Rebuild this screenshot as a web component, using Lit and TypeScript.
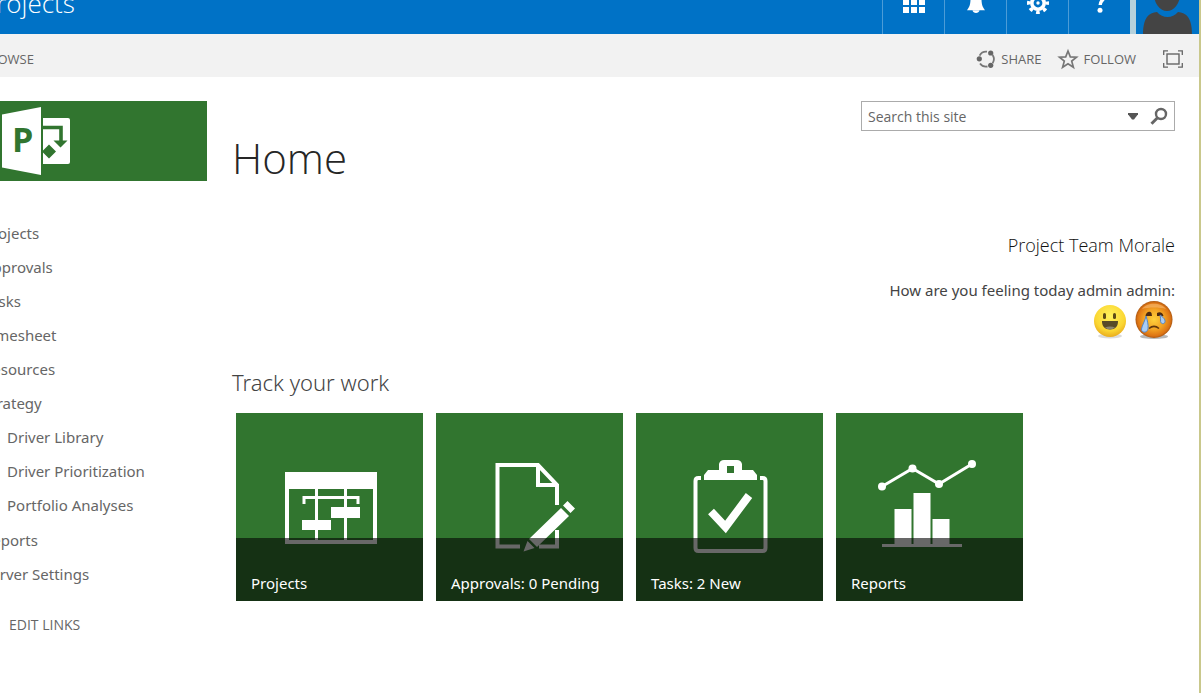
import { LitElement, html, css, svg } from "lit";
import { customElement } from "lit/decorators.js";

const appsIcon = svg`<svg class="bar-icon" viewBox="0 0 22 22" aria-hidden="true">
  ${[0, 8, 16].map((y) => [0, 8, 16].map((x) => svg`<rect x=${x} y=${y} width="6" height="6" fill="#fff"/>`))}
</svg>`;

const bellIcon = svg`<svg class="bar-icon" viewBox="0 0 22 22" aria-hidden="true" fill="#fff">
  <path d="M11 0c1 0 1.600.7 1.600 1.600C15.500 2.500 16.500 5 16.500 8c0 6 1.500 8.500 3.500 11.300H2C4 16.500 5.500 14 5.500 8c0-3 1-5.500 3.900-6.400C9.400.7 10 0 11 0z"/>
  <path d="M7.500 19.300h7c-.4 1.700-1.700 2.700-3.500 2.700s-3.100-1-3.500-2.700z"/>
</svg>`;

const gearIcon = svg`<svg class="bar-icon" viewBox="0 0 22 22" aria-hidden="true">
  <circle cx="11" cy="12" r="6.200" fill="none" stroke="#fff" stroke-width="3.600"/>
  <circle cx="11" cy="12" r="9.300" fill="none" stroke="#fff" stroke-width="3.400" stroke-dasharray="3.652 3.652" stroke-dashoffset="1.826"/>
  <circle cx="11" cy="12" r="1.700" fill="#fff"/>
</svg>`;

const helpIcon = svg`<svg class="bar-icon" viewBox="0 0 22 22" aria-hidden="true">
  <path d="M6 2.500C8 .8 10 .3 12 .5c3 .3 4.200 2.200 4 4.500-.3 3.500-4.800 4-4.800 9" fill="none" stroke="#fff" stroke-width="3.400"/>
  <circle cx="11" cy="19.300" r="2.500" fill="#fff"/>
</svg>`;

const avatarIcon = svg`<svg class="avatar" viewBox="0 0 63 64" aria-hidden="true" fill="#444">
  <ellipse cx="31" cy="24" rx="13" ry="17"/>
  <path d="M7 64c0-6 1-13 4-17 2-3 6-4.500 10-5 3 3.500 6.500 5 10.500 5s7.500-1.500 10.500-5c4 .5 8 2 10 5 3 4 4 11 4 17z"/>
</svg>`;

const shareIcon = svg`<svg class="cmd-icon" viewBox="0 0 20 20" aria-hidden="true">
  <path d="M3.600 6.600A7.500 7.500 0 0 1 11 2.700M16.600 6a7.500 7.500 0 0 1 0 8.200M11.500 17.500A7.500 7.500 0 0 1 4 14.500" fill="none" stroke="#777" stroke-width="1.800"/>
  <circle cx="3.300" cy="9.800" r="2.600" fill="#666"/>
  <circle cx="14.700" cy="4" r="2.600" fill="#666"/>
  <circle cx="14.700" cy="16.300" r="2.600" fill="#666"/>
</svg>`;

const starIcon = svg`<svg class="cmd-icon" viewBox="0 0 20 20" aria-hidden="true">
  <path d="M10 2l2.300 5.900 6.200.3-4.800 3.900 1.700 6.200L10 14.800l-5.400 3.500 1.700-6.200L1.500 8.200l6.200-.3z" fill="none" stroke="#777" stroke-width="1.700"/>
</svg>`;

const focusIcon = svg`<svg class="cmd-icon" viewBox="0 0 20 18" aria-hidden="true" fill="none" stroke="#666">
  <rect x="4" y="4" width="12" height="10" stroke-width="1.400"/>
  <path d="M.7 5V.8H5M15 .8h4.300V5M19.300 13v4.200H15M5 17.200H.7V13" stroke-width="1.300"/>
</svg>`;

const siteLogo = svg`<svg class="logo" viewBox="0 0 70 70" role="img" aria-label="Project">
  <rect x="40" y="12" width="30" height="46" rx="2" fill="#fff"/>
  <path d="M42 21.500h19V36" fill="none" stroke="#31752f" stroke-width="3.600"/>
  <path d="M53.500 34.500h14l-7 7zM49 38.500l7 7-7 7-7-7z" fill="#31752f"/>
  <path d="M2 8.500L41 1v68L2 61.500z" fill="#fff"/>
  <path d="M41 1h2v68h-2z" fill="#31752f"/>
  <text x="12" y="46" class="logo-letter">P</text>
</svg>`;

const caretIcon = svg`<svg class="caret" viewBox="0 0 12 8" aria-hidden="true"><path d="M1 1h10v1.200L7 7.500H5L1 2.200z" fill="#555"/></svg>`;

const lensIcon = svg`<svg class="lens" viewBox="0 0 18 18" aria-hidden="true" fill="none" stroke="#666">
  <circle cx="11" cy="7" r="5" stroke-width="2.400"/><path d="M7.500 10.800L1.500 16.800" stroke-width="3"/>
</svg>`;

const happyFace = svg`<svg class="face" viewBox="0 0 38 38" aria-hidden="true">
  <defs>
    <radialGradient id="happy" cx=".5" cy=".35" r=".65"><stop offset="0" stop-color="#fff25c"/><stop offset=".7" stop-color="#fbd733"/><stop offset="1" stop-color="#e9ac1d"/></radialGradient>
  </defs>
  <ellipse cx="19" cy="35" rx="12" ry="2.500" fill="#ccc" opacity=".7"/>
  <circle cx="19" cy="20" r="16" fill="url(#happy)"/>
  <rect x="12" y="12" width="3" height="6" rx="1.500" fill="#5c4a17"/><rect x="22" y="12" width="3" height="6" rx="1.500" fill="#5c4a17"/>
  <path d="M11 20h16c.3 5-3 8.500-8 8.500S10.700 25 11 20z" fill="#574a28"/><path d="M14 26.500c3-1.500 7-1.500 10 0-3 2.600-7 2.600-10 0z" fill="#8a8470"/>
</svg>`;

const sadFace = svg`<svg class="face" viewBox="0 0 38 38" aria-hidden="true">
  <defs>
    <radialGradient id="sad" cx=".5" cy=".5" r=".54"><stop offset="0" stop-color="#ffd23c"/><stop offset=".5" stop-color="#f3a324"/><stop offset=".82" stop-color="#dd7414"/><stop offset="1" stop-color="#8a4512"/></radialGradient>
  </defs>
  <ellipse cx="19" cy="35.500" rx="14" ry="2.500" fill="#999" opacity=".7"/>
  <circle cx="19" cy="18.500" r="18.500" fill="url(#sad)"/>
  <path d="M7 8C12 1 26 1 31 8 25 6 13 6 7 8z" fill="#f8bd73" opacity=".6"/>
  <path d="M10.500 15c0-3 4-6 6-3l.5 3zM22 12c3-2 6 0 6.500 3H22z" fill="#4d2a10"/>
  <path d="M14 27.500c3-2.500 7-2.500 10 0" fill="none" stroke="#62360c" stroke-width="1.600"/>
  <path d="M11 15c1.500 5 2.500 9 2 12.500-.5 5-7 4.500-6.500.5C7 24.500 10 20 11 15z" fill="#a9cdf5" stroke="#5585c5" stroke-width="1"/>
  <path d="M25 14c3 2 5.500 4.500 5 7-.8 2.500-4.200 2-4.400-.5-.2-2 .2-4-.6-6.500z" fill="#a9cdf5" stroke="#5585c5" stroke-width="1"/>
</svg>`;

const projectsArt = svg`<svg class="art" viewBox="0 0 187 188" aria-hidden="true">
  <path d="M49 59h92v72H49zM53 76v51h84V76z" fill="#fff" fill-rule="evenodd"/>
  <path d="M80.500 76v51M109.500 76v51" stroke="#fff" stroke-width="3"/>
  <path d="M68 91v-6.500h54V91" fill="none" stroke="#fff" stroke-width="3"/>
  <path d="M95 94h29v11H95zM66 107h29v10H66z" fill="#fff"/>
</svg>`;

const approvalsArt = svg`<svg class="art" viewBox="0 0 187 188" aria-hidden="true">
  <path d="M121 92V72L102 52H61.500v81.500H84M121 117v16.500h-18" fill="none" stroke="#fff" stroke-width="4"/>
  <path d="M102 52v20h20" fill="none" stroke="#fff" stroke-width="4"/>
  <path d="M125 95l8 8-32 31-8-8zM127 92.500l4.500-4.500 7.500 7.500-4.500 4.500zM91.500 128l7 7-11 3.500z" fill="#fff"/>
</svg>`;

const tasksArt = svg`<svg class="art" viewBox="0 0 187 188" aria-hidden="true">
  <path d="M65 65h-2.500q-3 0-3 3v67q0 3 3 3h64q3 0 3-3V68q0-3-3-3H124" fill="none" stroke="#fff" stroke-width="4"/>
  <path d="M68 67v-5l4-5h11v-6q1-4 5-4h13q4 0 5 4v6h11l4 5v5zM91 53v7h7v-7z" fill="#fff" fill-rule="evenodd"/>
  <path d="M75 98.500L89.500 114 113 82.500" fill="none" stroke="#fff" stroke-width="8"/>
</svg>`;

const reportsArt = svg`<svg class="art" viewBox="0 0 187 188" aria-hidden="true">
  <path d="M46 73.500L76.500 55.500 103 71l33-20" fill="none" stroke="#fff" stroke-width="3"/>
  <g fill="#fff"><circle cx="46" cy="73.500" r="4"/><circle cx="76.500" cy="55.500" r="4"/><circle cx="103" cy="71" r="4"/><circle cx="136" cy="51" r="4"/>
  <path d="M46 131h80v3H46zM58.500 96h17v35h-17zM77.500 80h17v51h-17zM96.500 106h17v25h-17z"/></g>
</svg>`;

@customElement("app-root")
export class AppRoot extends LitElement {
  static styles = css`
    :host {
      display: block;
      padding-right: 1px;
      overflow: hidden;
      background: #fff;
      color: #444;
      font: 15px/34px "Noto Sans", "Open Sans", sans-serif;
    }
    * { box-sizing: border-box; }
    a { color: inherit; text-decoration: none; }
    button { font: inherit; color: inherit; border: 0; background: none; padding: 0; display: flex; align-items: center; justify-content: center; }
    h1, h2, h3, p { margin: 0; font-weight: 400; }
    svg { display: block; overflow: visible; }

    .window { min-height: 100vh; border-right: 2px solid #c9c88c; overflow: hidden; }
    .suite { display: flex; height: 64px; margin-top: -30px; background: #0072c6; color: #fff; }
    .suite-title { flex: 1; margin-left: -19px; padding-top: 16px; font: 300 26px/34px "Open Sans", sans-serif; }
    .suite-button { width: 62px; border-left: 1px solid #4c9cd7; }
    .bar-icon { width: 22px; height: 22px; }
    .account { width: 69px; border-left: 6px solid #b5d1dc; justify-content: flex-start; }
    .avatar { width: 63px; height: 64px; }

    .commands { display: flex; align-items: center; height: 43px; padding: 7px 16px 0 0; background: #f2f2f2; color: #666; font: 13px/18px "Open Sans", sans-serif; }
    .browse { flex: 1; }
    .browse a { margin-left: -19px; }
    .command { gap: 5px; margin-right: 17px; }
    .command:last-child { margin: 0 0 0 10px; }
    .cmd-icon { width: 20px; height: 20px; }

    .page { display: flex; gap: 25px; padding: 24px 24px 0 0; }
    .side { flex: none; width: 228px; margin-left: -21px; color: #666; }
    .logo-link { display: flex; align-items: center; height: 80px; padding-left: 21px; background: #31752f; }
    .logo { width: 70px; height: 70px; }
    .logo-letter { font: 700 34px "Open Sans", sans-serif; fill: #31752f; }
    .nav { margin-top: 35px; padding-left: 4px; }
    .list { list-style: none; margin: 0; padding: 0; }
    .list .list { padding: 0 0 1px 24px; }
    .edit { margin: 17px 0 0 26px; font: 14px/34px "Open Sans", sans-serif; }

    .main { flex: 1; min-width: 0; }
    .top { display: flex; justify-content: space-between; align-items: flex-start; }
    .title { padding-top: 28px; font: 300 42px/58px "Open Sans", sans-serif; color: #262626; }
    .search { display: flex; align-items: center; width: 314px; height: 30px; border: 1px solid #ababab; padding: 0 6px; }
    .search-box { flex: 1; min-width: 0; border: 0; padding: 1px 0 0; outline: 0; background: none; font: 14px/20px "Open Sans", sans-serif; color: #666; }
    .search-box::placeholder { color: #666; opacity: 1; }
    .caret { width: 12px; height: 8px; margin-right: 11px; }
    .lens { width: 18px; height: 18px; }

    .morale { display: flex; flex-direction: column; align-items: flex-end; margin-top: 44px; }
    .morale-title { font: 300 18px/28px "Open Sans", sans-serif; color: #111; }
    .question { margin-top: 20px; line-height: 22px; }
    .faces { display: flex; gap: 6px; padding-right: 2px; }
    .face { width: 38px; height: 38px; }
    .heading { margin-top: 28px; font: 350 22px/30px "Noto Sans", sans-serif; color: #444; }
    .tiles { display: flex; flex-wrap: wrap; gap: 13px; margin: 16px 0 0 4px; }
    .tile { position: relative; display: block; width: 187px; height: 188px; background: #31752f; color: #fff; overflow: hidden; }
    .art { width: 187px; height: 188px; }
    .label { position: absolute; left: 0; right: 0; bottom: 0; height: 63px; padding: 28px 15px 0; background: rgba(4, 4, 4, 0.6); line-height: 34px; }
  `;

  private tiles = [
    { label: "Projects", art: projectsArt },
    { label: "Approvals: 0 Pending", art: approvalsArt },
    { label: "Tasks: 2 New", art: tasksArt },
    { label: "Reports", art: reportsArt },
  ];

  private links: { text: string; children?: string[] }[] = [
    { text: "Projects" },
    { text: "Approvals" },
    { text: "Tasks" },
    { text: "Timesheet" },
    { text: "Resources" },
    { text: "Strategy", children: ["Driver Library", "Driver Prioritization", "Portfolio Analyses"] },
    { text: "Reports" },
    { text: "Server Settings" },
  ];

  render() {
    return html`
      <div class="window">
        <header class="suite">
          <div class="suite-title">Projects</div>
          <button class="suite-button" aria-label="Apps">${appsIcon}</button>
          <button class="suite-button" aria-label="Notifications">${bellIcon}</button>
          <button class="suite-button" aria-label="Settings">${gearIcon}</button>
          <button class="suite-button" aria-label="Help">${helpIcon}</button>
          <button class="account" aria-label="Account">${avatarIcon}</button>
        </header>
        <div class="commands">
          <div class="browse"><a href="#">BROWSE</a></div>
          <button class="command">${shareIcon}SHARE</button>
          <button class="command">${starIcon}FOLLOW</button>
          <button class="command" aria-label="Focus on content">${focusIcon}</button>
        </div>
        <div class="page">
          <aside class="side">
            <a class="logo-link" href="#">${siteLogo}</a>
            <nav class="nav">
              <ul class="list">
                ${this.links.map(
                  (link) => html`<li>
                    <a href="#">${link.text}</a>
                    ${link.children
                      ? html`<ul class="list">${link.children.map((child) => html`<li><a href="#">${child}</a></li>`)}</ul>`
                      : null}
                  </li>`
                )}
              </ul>
              <button class="edit">EDIT LINKS</button>
            </nav>
          </aside>
          <main class="main">
            <div class="top">
              <h1 class="title">Home</h1>
              <form class="search" role="search">
                <input class="search-box" type="text" aria-label="Search this site" placeholder="Search this site" />
                <button type="button" aria-label="Search scope">${caretIcon}</button>
                <button type="button" aria-label="Search">${lensIcon}</button>
              </form>
            </div>
            <section class="morale">
              <h3 class="morale-title">Project Team Morale</h3>
              <p class="question">How are you feeling today admin admin:</p>
              <div class="faces">
                <button aria-label="Happy">${happyFace}</button>
                <button aria-label="Sad">${sadFace}</button>
              </div>
            </section>
            <h2 class="heading">Track your work</h2>
            <div class="tiles">
              ${this.tiles.map((tile) => html`<a class="tile" href="#">${tile.art}<span class="label">${tile.label}</span></a>`)}
            </div>
          </main>
        </div>
      </div>
    `;
  }
}
